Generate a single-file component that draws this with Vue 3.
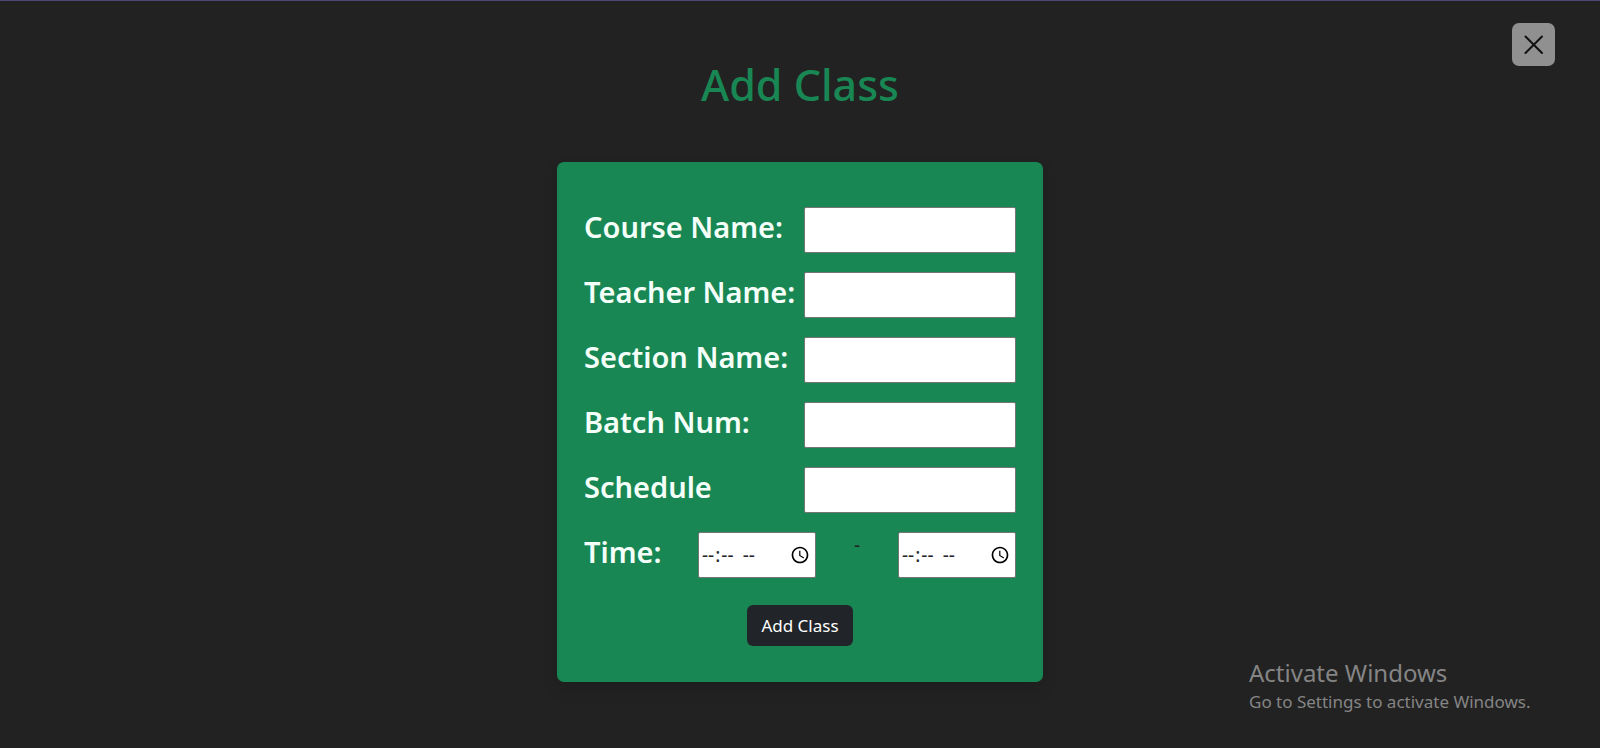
<script setup>
import { reactive } from 'vue'

const fields = [
  { key: 'course', label: 'Course Name:' },
  { key: 'teacher', label: 'Teacher Name:' },
  { key: 'section', label: 'Section Name:' },
  { key: 'batch', label: 'Batch Num:' },
  { key: 'schedule', label: 'Schedule' },
]

const form = reactive({
  course: '',
  teacher: '',
  section: '',
  batch: '',
  schedule: '',
  start: '',
  end: '',
})
</script>

<template>
  <main class="page">
    <button class="close" type="button" aria-label="Close">
      <svg viewBox="0 0 20 20" width="20" height="20" aria-hidden="true">
        <path d="M1.5 1.5 L18 18 M18 1.5 L1.5 18" />
      </svg>
    </button>

    <h1 class="title">Add Class</h1>

    <form class="card" @submit.prevent>
      <div v-for="field in fields" :key="field.key" class="row">
        <label class="label" :for="field.key">{{ field.label }}</label>
        <input :id="field.key" v-model="form[field.key]" class="input" type="text" />
      </div>
      <div class="row">
        <label class="label" for="start">Time:</label>
        <div class="times">
          <input id="start" v-model="form.start" class="input time" type="time" />
          <span class="dash">-</span>
          <input id="end" v-model="form.end" class="input time" type="time" aria-label="End time" />
        </div>
      </div>
      <button class="submit" type="submit">Add Class</button>
    </form>

    <aside class="notice">
      <p class="notice-title">Activate Windows</p>
      <p class="notice-text">Go to Settings to activate Windows.</p>
    </aside>
  </main>
</template>

<style>
body {
  background: #222222;
}
</style>

<style scoped>
.page {
  box-sizing: border-box;
  position: relative;
  min-height: 100vh;
  padding: 56px 24px 64px;
  border-top: 1px solid #4d477a;
  background: #222222;
  color: #212529;
  font-family: "Segoe UI", "Noto Sans", "Open Sans", sans-serif;
  font-size: 17px;
  line-height: 26px;
}

.close {
  position: absolute;
  top: 22px;
  right: 45px;
  display: flex;
  align-items: center;
  justify-content: center;
  width: 43px;
  height: 43px;
  padding: 0;
  border: 0;
  border-radius: 7px;
  background: #909090;
}

.close path {
  fill: none;
  stroke: #111111;
  stroke-width: 2;
  stroke-linecap: round;
}

.title {
  margin: 0 0 49px;
  color: #198754;
  font-size: 43px;
  font-weight: 500;
  line-height: 56px;
  text-align: center;
}

.card {
  box-sizing: border-box;
  display: flex;
  flex-direction: column;
  gap: 19px;
  max-width: 486px;
  margin: 0 auto;
  padding: 45px 27px 36px;
  border-radius: 7px;
  background: #198754;
  box-shadow: 0 8px 16px rgba(0, 0, 0, 0.12);
}

.row {
  display: flex;
  justify-content: space-between;
}

.label {
  color: #f4fff9;
  font-size: 29px;
  font-weight: 600;
  line-height: 40px;
  white-space: nowrap;
}

.input {
  box-sizing: border-box;
  width: 212px;
  height: 46px;
  padding: 1px 2px;
  border: 1px solid #767676;
  border-radius: 2px;
  background: #ffffff;
  color: #212529;
  font: inherit;
}

.times {
  display: flex;
  justify-content: space-between;
  width: 318px;
}

.time {
  width: 118px;
  font-size: 19px;
}

.time::-webkit-datetime-edit-ampm-field {
  margin-left: 4px;
}

.dash {
  font-size: 19px;
  line-height: 26px;
}

.submit {
  align-self: center;
  height: 41px;
  margin-top: 8px;
  padding: 0 14px;
  border: 0;
  border-radius: 6px;
  background: #212529;
  color: #ffffff;
  font: inherit;
}

.notice {
  position: absolute;
  right: 64px;
  bottom: 33px;
  width: 287px;
  color: #858585;
  white-space: nowrap;
}

.notice p {
  margin: 0;
}

.notice-title {
  font-size: 24px;
  line-height: 32px;
}
</style>
